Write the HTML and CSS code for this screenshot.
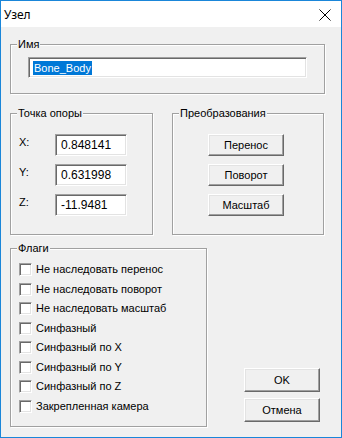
FILE: index.html
```html
<!DOCTYPE html>
<html lang="ru">
<head>
    <meta charset="UTF-8">
    <title>Узел</title>
    <link rel="stylesheet" href="styles.css">
</head>
<body>
    <div class="window">
        <div class="titlebar">
            <span class="title">Узел</span>
            <svg class="close" width="12" height="12" viewBox="0 0 12 12">
                <path d="M0.5 0.5 L11.5 11.5 M11.5 0.5 L0.5 11.5" stroke="#000" stroke-width="1" fill="none"/>
            </svg>
        </div>

        <div class="client">
            <fieldset class="group group-name">
                <legend>Имя</legend>
                <div class="group-body">
                    <div class="edit edit-name"><span class="sel">Bone_Body</span></div>
                </div>
            </fieldset>

            <div class="row">
                <fieldset class="group group-pivot">
                    <legend>Точка опоры</legend>
                    <div class="group-body coords">
                        <span class="coord-label">X:</span>
                        <div class="edit edit-coord">0.848141</div>
                        <span class="coord-label">Y:</span>
                        <div class="edit edit-coord">0.631998</div>
                        <span class="coord-label">Z:</span>
                        <div class="edit edit-coord">-11.9481</div>
                    </div>
                </fieldset>

                <fieldset class="group group-transform">
                    <legend>Преобразования</legend>
                    <div class="group-body tbuttons">
                        <button class="btn">Перенос</button>
                        <button class="btn">Поворот</button>
                        <button class="btn">Масштаб</button>
                    </div>
                </fieldset>
            </div>

            <div class="row row-bottom">
                <fieldset class="group group-flags">
                    <legend>Флаги</legend>
                    <ul class="group-body flags">
                        <li><span class="check"></span>Не наследовать перенос</li>
                        <li><span class="check"></span>Не наследовать поворот</li>
                        <li><span class="check"></span>Не наследовать масштаб</li>
                        <li><span class="check"></span>Синфазный</li>
                        <li><span class="check"></span>Синфазный по X</li>
                        <li><span class="check"></span>Синфазный по Y</li>
                        <li><span class="check"></span>Синфазный по Z</li>
                        <li><span class="check"></span>Закрепленная камера</li>
                    </ul>
                </fieldset>

                <div class="dlg-buttons">
                    <button class="btn btn-dlg">OK</button>
                    <button class="btn btn-dlg">Отмена</button>
                </div>
            </div>
        </div>
    </div>
</body>
</html>
```

FILE: styles.css
```css
* {
    box-sizing: border-box;
}

body {
    margin: 0;
    font-family: "Liberation Sans", Arial, sans-serif;
    font-size: 11px;
    color: #000;
    background: #fff;
}

.window {
    width: 342px;
    height: 438px;
    border: 1px solid #1a86d9;
    background: #f0f0f0;
    display: flex;
    flex-direction: column;
}

.titlebar {
    height: 26px;
    background: #fff;
    display: flex;
    align-items: center;
    justify-content: space-between;
    padding: 0 10px 0 3px;
}

.title {
    font-family: "Noto Sans", "Open Sans", sans-serif;
    font-size: 12px;
}

.close {
    display: block;
    margin-top: 1px;
}

.client {
    flex: 1;
    padding: 11px 0 0 9px;
}

/* group boxes */
.group {
    margin: 0;
    padding: 0;
    min-width: 0;
    border: 1px solid #a0a0a0;
    box-shadow: 1px 1px 0 #fff, inset 1px 1px 0 #fff;
}

.group legend {
    margin-left: 6px;
    padding: 0 1px;
    line-height: 13px;
    height: 13px;
    background: #f0f0f0;
}

.group-name {
    width: 315px;
    height: 56px;
}

.group-name .group-body {
    padding: 6px 0 0 17px;
}

.row {
    display: flex;
    margin-top: 13px;
}

.row-bottom {
    margin-top: 7px;
}

.group-pivot {
    width: 143px;
    height: 128px;
}

.group-transform {
    width: 152px;
    height: 128px;
    margin-left: 19px;
}

/* edit boxes */
.edit {
    background: #fff;
    border: 1px solid;
    border-color: #a0a0a0 #fff #fff #a0a0a0;
    box-shadow: inset 1px 1px 0 #696969, inset -1px -1px 0 #e3e3e3;
    display: flex;
    align-items: center;
    white-space: nowrap;
}

.edit-name {
    width: 279px;
    height: 21px;
    padding-left: 4px;
}

.sel {
    background: #0078d7;
    color: #fff;
    line-height: 14px;
    padding: 0 1px;
}

.coords {
    display: grid;
    grid-template-columns: 36px 72px;
    grid-auto-rows: 22px;
    row-gap: 8px;
    padding: 14px 0 0 8px;
}

.coord-label {
    padding-top: 2px;
}

.edit-coord {
    padding-left: 5px;
    font-size: 12px;
}

/* buttons */
.btn {
    font-family: inherit;
    font-size: 11px;
    color: #000;
    background: #f0f0f0;
    border: 1px solid;
    border-color: #fff #696969 #696969 #fff;
    box-shadow: inset -1px -1px 0 #a0a0a0, inset 1px 1px 0 #e3e3e3;
    padding: 0;
    margin: 0;
}

.tbuttons {
    display: flex;
    flex-direction: column;
    gap: 8px;
    padding: 14px 0 0 35px;
}

.tbuttons .btn {
    width: 76px;
    height: 22px;
}

/* flags */
.group-flags {
    width: 197px;
    height: 185px;
}

.flags {
    list-style: none;
    margin: 0;
    padding: 8px 0 0 8px;
}

.flags li {
    height: 19.5px;
    display: flex;
    align-items: flex-start;
    gap: 4px;
}

.check {
    width: 13px;
    height: 13px;
    flex: none;
    background: #fff;
    border: 1px solid;
    border-color: #a0a0a0 #fff #fff #a0a0a0;
    box-shadow: inset 1px 1px 0 #696969, inset -1px -1px 0 #e3e3e3;
}

.dlg-buttons {
    display: flex;
    flex-direction: column;
    gap: 6px;
    align-self: flex-end;
    margin: 0 0 5px 37px;
}

.btn-dlg {
    width: 76px;
    height: 24px;
}
```
